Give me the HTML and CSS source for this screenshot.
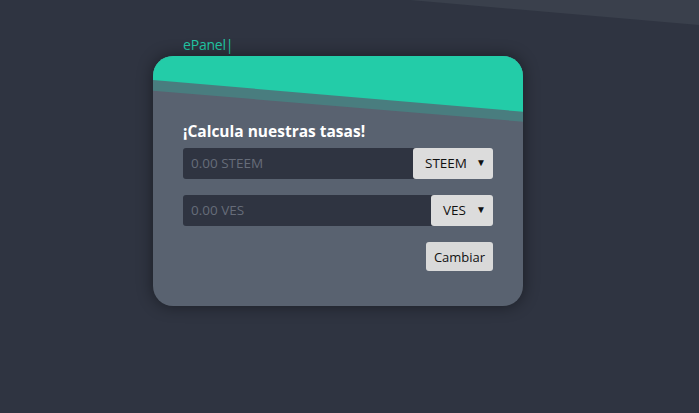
FILE: index.html
```html
<!DOCTYPE html>
<html lang="es">
<head>
<meta charset="utf-8">
<title>ePanel</title>
<link rel="stylesheet" href="styles.css">
</head>
<body>
<main class="page">
  <div class="brand">ePanel|</div>
  <section class="card">
    <h2 class="title">¡Calcula nuestras tasas!</h2>
    <div class="field">
      <div class="amount">0.00 STEEM</div>
      <div class="select select-steem">STEEM<span class="caret">▼</span></div>
    </div>
    <div class="field">
      <div class="amount">0.00 VES</div>
      <div class="select select-ves">VES<span class="caret">▼</span></div>
    </div>
    <div class="actions">
      <button class="btn">Cambiar</button>
    </div>
  </section>
</main>
</body>
</html>
```
FILE: styles.css
```css
* { box-sizing: border-box; }
html, body { margin: 0; height: 100%; }
body {
  background: #2f3441;
  font-family: "Open Sans", "Liberation Sans", sans-serif;
  position: relative;
  overflow: hidden;
}
body::before {
  content: "";
  position: absolute;
  top: 0; left: 0; right: 0; height: 26px;
  background: #3a404c;
  clip-path: polygon(410px 0, 100% 0, 100% 25px);
}
.page {
  position: relative;
  padding: 35px 0 0 153px;
}
.brand {
  color: #22c9a6;
  font-size: 14px;
  line-height: 20px;
  padding-left: 30px;
  height: 21px;
  letter-spacing: -0.2px;
}
.card {
  position: relative;
  width: 370px;
  height: 250px;
  background: #596270;
  border-radius: 20px;
  overflow: hidden;
  box-shadow: 0 0 16px rgba(0,0,0,0.45);
  padding: 65px 30px 0 30px;
}
.card::before {
  content: "";
  position: absolute;
  top: 0; left: 0; width: 100%; height: 66px;
  background: #497d7f;
  clip-path: polygon(0 0, 100% 0, 100% 65.7px, 0 34.7px);
}
.card::after {
  content: "";
  position: absolute;
  top: 0; left: 0; width: 100%; height: 66px;
  background: #23cca8;
  clip-path: polygon(0 0, 100% 0, 100% 55.7px, 0 24px);
}
.title {
  position: relative;
  margin: 0;
  color: #fff;
  font-size: 15.5px;
  font-weight: 700;
  line-height: 20px;
  letter-spacing: 0;
}
.field {
  display: flex;
  height: 31px;
  margin-top: 7px;
}
.field + .field { margin-top: 16px; }
.amount {
  flex: 1;
  background: #2f3441;
  border-radius: 3px 0 0 3px;
  color: #666c79;
  font-size: 13.5px;
  line-height: 31px;
  padding-left: 8px;
  margin-right: -3px;
}
.select {
  position: relative;
  background: #dcdcdc;
  border-radius: 3px;
  color: #111;
  font-size: 13.5px;
  line-height: 31px;
  padding-left: 12px;
}
.select-steem { width: 80px; }
.select-ves { width: 62px; }
.caret {
  position: absolute;
  right: 7px;
  top: 0;
  font-size: 10px;
  line-height: 29px;
}
.actions {
  display: flex;
  justify-content: flex-end;
  margin-top: 16px;
}
.btn {
  font-family: inherit;
  font-size: 13px;
  color: #111;
  background: #d9d9d9;
  border: none;
  border-radius: 3px;
  height: 29px;
  width: 67px;
  padding: 0;
}
```
